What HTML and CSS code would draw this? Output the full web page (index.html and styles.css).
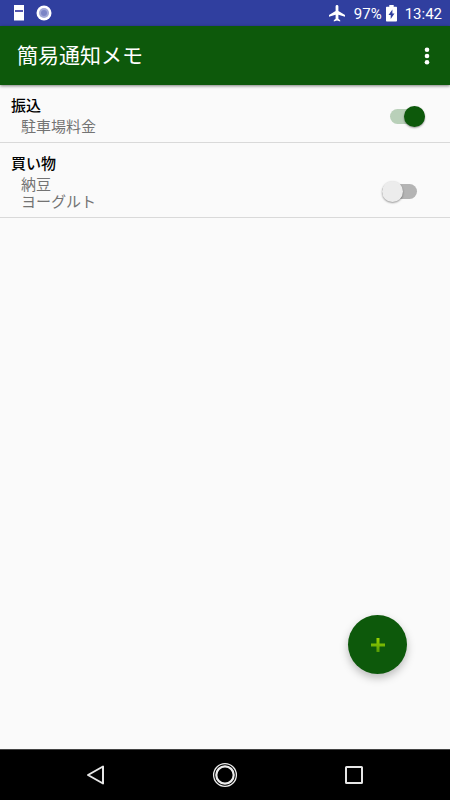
FILE: index.html
```html
<!DOCTYPE html>
<html lang="ja">
<head>
<meta charset="utf-8">
<meta name="viewport" content="width=device-width, initial-scale=1">
<title>簡易通知メモ</title>
<link rel="stylesheet" href="styles.css">
</head>
<body>
<div class="status-bar">
  <div class="status-group">
    <svg class="note-icon" width="12" height="16" viewBox="0 0 12 16" aria-hidden="true"><path d="M1 0h10v15.500H1z" fill="#fff"/><path d="M2 6h8" stroke="#1b1f93" stroke-width="1.500"/></svg>
    <svg width="16" height="16" viewBox="0 0 16 16" aria-hidden="true"><circle cx="8" cy="8" r="7.500" fill="#fff"/><circle cx="8" cy="8" r="5" fill="#a3a9d8"/><circle cx="8" cy="8" r="3" fill="#7c85c6"/></svg>
  </div>
  <div class="status-group">
    <svg class="plane-icon" width="16" height="17" viewBox="0 0 16 17" aria-hidden="true"><path d="M8 0c.8 0 1.400.6 1.400 1.400v4.700L16 10v1.700l-6.600-2v4.100l1.800 1.400v1.300L8 15.600l-3.200.9v-1.300l1.800-1.400V9.700L0 11.700V10l6.600-3.900V1.400C6.600.6 7.200 0 8 0z" fill="#fff"/></svg>
    <span>97%</span>
    <svg class="battery-icon" width="11" height="17" viewBox="0 0 11 17" aria-hidden="true"><path d="M3.300 0h4.400v1.700H10c.6 0 1 .4 1 1v12.800c0 .6-.4 1-1 1H1c-.6 0-1-.4-1-1V2.700c0-.6.4-1 1-1h2.300z" fill="#fff"/><path d="M6.400 4.500L2.500 10h2.200v4L8.500 8.500H6.400z" fill="#303f9f"/></svg>
    <span>13:42</span>
  </div>
</div>

<header class="app-bar">
  <h1 class="app-title">簡易通知メモ</h1>
  <button class="menu-button" type="button" aria-label="メニュー">
    <svg width="6" height="18" viewBox="0 0 6 18" aria-hidden="true" fill="#fff"><circle cx="3" cy="2.700" r="2.300"/><circle cx="3" cy="9" r="2.300"/><circle cx="3" cy="15.300" r="2.300"/></svg>
  </button>
</header>

<main class="content">
  <ul class="memo-list">
    <li class="memo">
      <label class="memo-text" for="memo-1">
        <span class="memo-title">振込</span>
        <span class="memo-body">駐車場料金</span>
      </label>
      <input class="switch" id="memo-1" type="checkbox" role="switch" checked>
    </li>
    <li class="memo">
      <label class="memo-text" for="memo-2">
        <span class="memo-title">買い物</span>
        <span class="memo-body">納豆<br>ヨーグルト</span>
      </label>
      <input class="switch" id="memo-2" type="checkbox" role="switch">
    </li>
  </ul>
  <button class="fab" type="button" aria-label="メモを追加">
    <svg width="14" height="14" viewBox="0 0 14 14" aria-hidden="true"><defs><linearGradient id="plus" x1="0" y1="0" x2="0" y2="1"><stop offset="0" stop-color="#9bd400"/><stop offset="1" stop-color="#559b05"/></linearGradient></defs><path d="M5.500 0h3v5.500H14v3H8.500V14h-3V8.500H0v-3h5.500z" fill="url(#plus)"/></svg>
  </button>
</main>

<nav class="nav-bar">
  <button class="nav-button" type="button" aria-label="戻る">
    <svg width="24" height="24" viewBox="0 0 24 24" aria-hidden="true"><path d="M4 12L19 3.500v17z" fill="none" stroke="#e6e6e6" stroke-width="2" stroke-linejoin="round"/></svg>
  </button>
  <button class="nav-button" type="button" aria-label="ホーム">
    <svg width="26" height="26" viewBox="0 0 26 26" aria-hidden="true" fill="none" stroke="#ededed"><circle cx="13" cy="13" r="11.400" stroke-width="1.300"/><circle cx="13" cy="13" r="8.700" stroke-width="2.200"/></svg>
  </button>
  <button class="nav-button" type="button" aria-label="履歴">
    <svg width="24" height="24" viewBox="0 0 24 24" aria-hidden="true"><rect x="4" y="4" width="16" height="16" rx=".5" fill="none" stroke="#e6e6e6" stroke-width="2"/></svg>
  </button>
</nav>
</body>
</html>
```
FILE: styles.css
```css
* {
  box-sizing: border-box;
}

body {
  margin: 0;
  min-height: 100vh;
  display: flex;
  flex-direction: column;
  background: #fafafa;
  font-family: Roboto, "Noto Sans CJK JP", sans-serif;
}

button {
  display: flex;
  align-items: center;
  justify-content: center;
  padding: 0;
  border: 0;
  background: none;
}

.status-bar {
  display: flex;
  align-items: center;
  justify-content: space-between;
  height: 26px;
  padding: 0 8px 0 13px;
  background: #303f9f;
  color: #fff;
  font-size: 15px;
  font-weight: 400;
}

.status-group {
  display: flex;
  align-items: center;
}

.status-group span {
  padding-top: 2px;
}

.note-icon {
  margin-right: 11px;
}

.plane-icon {
  margin-right: 9px;
}

.battery-icon {
  margin: 0 8px 0 4px;
}

.app-bar {
  position: relative;
  display: flex;
  align-items: center;
  justify-content: space-between;
  height: 59px;
  padding: 0 11px 0 17px;
  background: #0d590b;
  box-shadow: 0 1px 3px rgba(0, 0, 0, 0.5);
}

.app-title {
  margin: 0;
  padding-bottom: 3px;
  color: #fff;
  font-size: 21px;
  font-weight: 400;
}

.menu-button {
  width: 24px;
  height: 40px;
}

.content {
  position: relative;
  flex: 1;
}

.memo-list {
  margin: 0;
  padding: 0;
  list-style: none;
}

.memo {
  display: flex;
  align-items: flex-end;
  border-bottom: 1px solid #d9d9d9;
}

.memo-text {
  flex: 1;
  padding: 11px 11px 6px;
  font-size: 15px;
}

.memo-title {
  display: block;
  color: #000;
  font-weight: 500;
  line-height: 21px;
}

.memo-body {
  display: block;
  padding: 2px 0 0 10px;
  color: #737373;
  line-height: 17px;
}

.switch {
  appearance: none;
  position: relative;
  width: 35px;
  height: 21px;
  margin: 0 33px 15px 0;
}

.switch:checked {
  margin-right: 25px;
}

.switch::before {
  content: "";
  position: absolute;
  inset: 3px 0;
  border-radius: 8px;
  background: #b4b4b4;
}

.switch:checked::before {
  background: #b9d0b9;
}

.switch::after {
  content: "";
  position: absolute;
  top: 0;
  left: 0;
  width: 21px;
  height: 21px;
  border-radius: 50%;
  background: #ececec;
  box-shadow: 0 1px 2px rgba(0, 0, 0, 0.4);
}

.switch:checked::after {
  left: auto;
  right: 0;
  background: #0d590b;
}

.fab {
  position: absolute;
  right: 43px;
  bottom: 75px;
  width: 59px;
  height: 59px;
  border-radius: 50%;
  background: #0d590b;
  box-shadow: 0 4px 8px rgba(0, 0, 0, 0.25);
}

.nav-bar {
  display: flex;
  align-items: center;
  justify-content: center;
  gap: 81px;
  height: 51px;
  border-top: 1px solid #444;
  background: #000;
}

.nav-button {
  width: 48px;
  height: 48px;
}
```
